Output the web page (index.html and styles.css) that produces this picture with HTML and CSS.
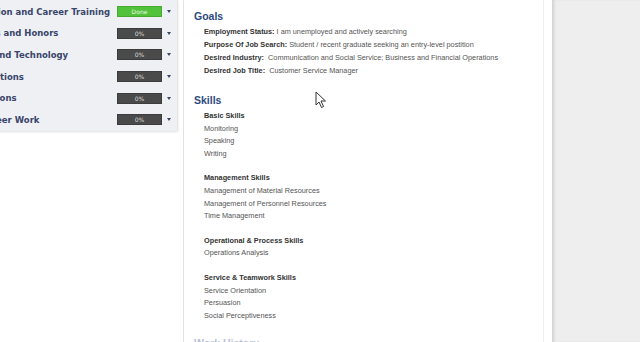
FILE: index.html
```html
<!DOCTYPE html>
<html>
<head>
<meta charset="utf-8">
<link rel="stylesheet" href="styles.css">
</head>
<body>
<div class="screen">
  <div class="page">
    <div class="side">
      <div class="row"><span class="label">Education and Career Training</span><span class="badge done">Done</span><span class="arrow"></span></div>
      <div class="row"><span class="label">Awards and Honors</span><span class="badge">0%</span><span class="arrow"></span></div>
      <div class="row"><span class="label">Skills and Technology</span><span class="badge">0%</span><span class="arrow"></span></div>
      <div class="row"><span class="label">Publications</span><span class="badge">0%</span><span class="arrow"></span></div>
      <div class="row"><span class="label">Affiliations</span><span class="badge">0%</span><span class="arrow"></span></div>
      <div class="row"><span class="label">Volunteer Work</span><span class="badge">0%</span><span class="arrow"></span></div>
    </div>
    <div class="main">
      <h2 class="heading">Goals</h2>
      <div class="goals">
        <p class="line"><b>Employment Status:</b> I am unemployed and actively searching</p>
        <p class="line"><b>Purpose Of Job Search:</b> Student / recent graduate seeking an entry-level postition</p>
        <p class="line"><b>Desired Industry:</b>&nbsp; Communication and Social Service; Business and Financial Operations</p>
        <p class="line"><b>Desired Job Title:</b>&nbsp; Customer Service Manager</p>
      </div>
      <h2 class="heading skills-head">Skills</h2>
      <div class="group first">
        <p class="ghead">Basic Skills</p>
        <p class="item">Monitoring</p>
        <p class="item">Speaking</p>
        <p class="item">Writing</p>
      </div>
      <div class="group">
        <p class="ghead">Management Skills</p>
        <p class="item">Management of Material Resources</p>
        <p class="item">Management of Personnel Resources</p>
        <p class="item">Time Management</p>
      </div>
      <div class="group">
        <p class="ghead">Operational &amp; Process Skills</p>
        <p class="item">Operations Analysis</p>
      </div>
      <div class="group">
        <p class="ghead">Service &amp; Teamwork Skills</p>
        <p class="item">Service Orientation</p>
        <p class="item">Persuasion</p>
        <p class="item">Social Perceptiveness</p>
      </div>
      <h2 class="heading next-head">Work History</h2>
    </div>
  </div>
  <div class="gutter"></div>
  <svg class="cursor" width="12" height="18" viewBox="0 0 12 18"><path d="M1 1 L1 14 L4 11 L6.5 16.5 L8.5 15.5 L6 10 L10.5 10 Z" fill="#fff" stroke="#333" stroke-width="1" stroke-linejoin="round"/></svg>
</div>
</body>
</html>
```

FILE: styles.css
```css
html, body {
  margin: 0;
  padding: 0;
  background: #fff;
}
.screen {
  position: relative;
  display: flex;
  width: 640px;
  height: 342px;
  overflow: hidden;
}
.page {
  flex: none;
  width: 552px;
  display: flex;
  align-items: flex-start;
  background: #fff;
}
.side {
  flex: none;
  width: 212px;
  height: 130px;
  margin-left: -35px;
  padding-top: 1px;
  background: #eef0f4;
  border-right: 1px solid #e3e5ea;
  box-shadow: 0 1px 2px rgba(0, 0, 0, 0.12);
}
.row {
  height: 21.6px;
  display: flex;
  align-items: center;
  padding-right: 6px;
}
.label {
  flex: 1;
  white-space: nowrap;
  overflow: hidden;
  font-family: "DejaVu Sans", Verdana, sans-serif;
  font-weight: bold;
  font-size: 8.5px;
  color: #3a456a;
}
.badge {
  flex: none;
  width: 45px;
  height: 11px;
  box-sizing: border-box;
  background: #4a4a4a;
  border: 1px solid #3c3c3c;
  color: #d8d8d8;
  font-family: "DejaVu Sans", sans-serif;
  font-size: 6px;
  line-height: 9px;
  text-align: center;
}
.badge.done {
  background: #52c23a;
  border-color: #45ab30;
  color: #e8f8e4;
}
.arrow {
  flex: none;
  width: 0;
  height: 0;
  margin-left: 5px;
  border-left: 2.5px solid transparent;
  border-right: 2.5px solid transparent;
  border-top: 3px solid #3a456a;
}
.main {
  flex: none;
  align-self: stretch;
  width: 349px;
  margin-left: 5px;
  padding-left: 10px;
  border-left: 1px solid #e2e2e2;
  border-right: 1px solid #f0f0f0;
  padding-top: 9px;
  font-family: "Liberation Sans", Arial, sans-serif;
}
.heading {
  margin: 0 0 2px;
  font-size: 10.5px;
  line-height: 14px;
  font-weight: bold;
  color: #2e4a7e;
}
.skills-head {
  margin-top: 16px;
}
.next-head {
  margin-top: 14px;
  opacity: 0.35;
}
.line {
  margin: 0;
  padding-left: 10px;
  font-size: 7.3px;
  line-height: 13px;
  color: #555;
  white-space: nowrap;
}
.line b {
  color: #333;
}
.group {
  margin-top: 12px;
  padding-left: 10px;
}
.group.first {
  margin-top: 3px;
}
.ghead {
  margin: 0;
  font-size: 7.3px;
  line-height: 12.6px;
  font-weight: bold;
  color: #333;
}
.item {
  margin: 0;
  font-size: 7.3px;
  line-height: 12.6px;
  color: #555;
}
.gutter {
  flex: 1;
  background: #eeeeee;
  box-shadow: inset 3px 0 3px -1px rgba(0, 0, 0, 0.12);
}
.cursor {
  position: absolute;
  left: 315px;
  top: 91px;
}
```
